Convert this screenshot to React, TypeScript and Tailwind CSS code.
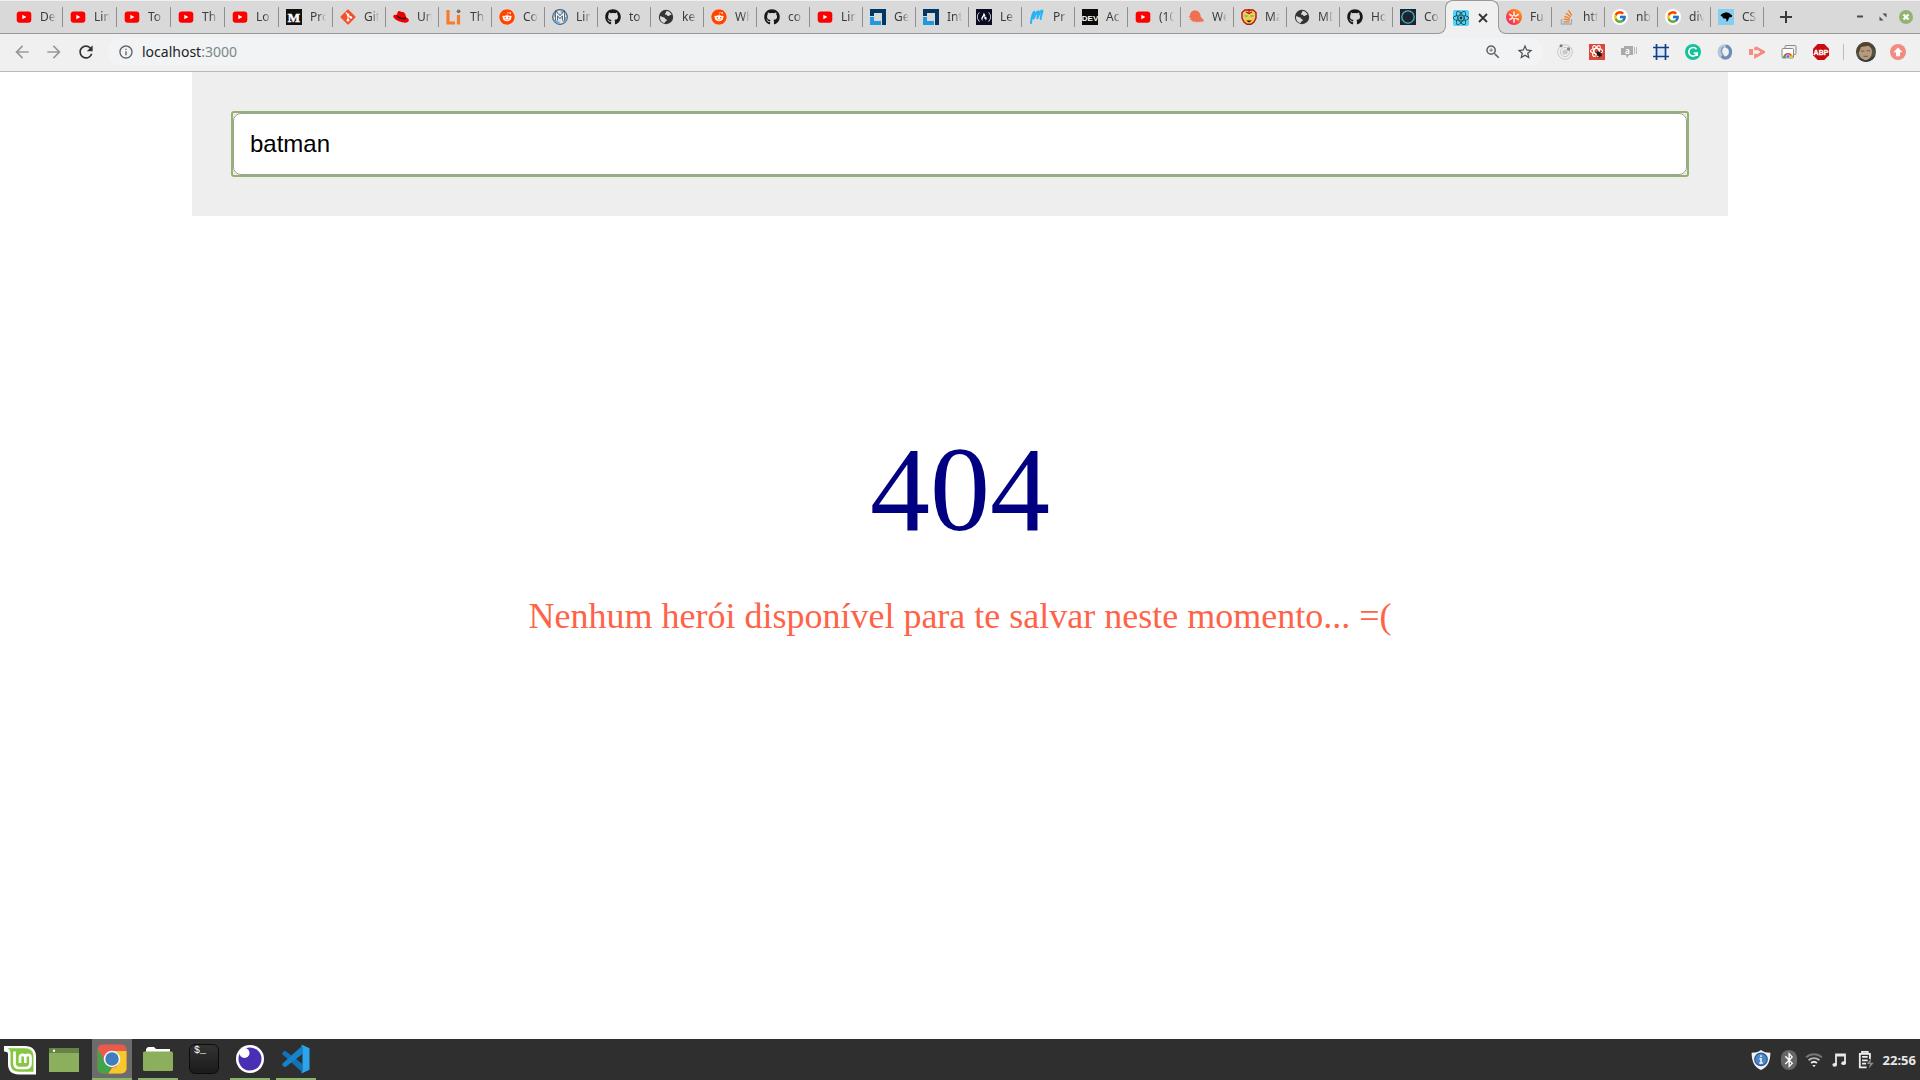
import React from "react";
import {
  FaBluetoothB,
  FaFreeCodeCamp,
  FaGitAlt,
  FaGithub,
  FaReact,
  FaReddit,
} from "react-icons/fa";
import { FcGoogle } from "react-icons/fc";
import { MdArrowBack, MdArrowForward, MdInfoOutline, MdOutlineZoomIn, MdRefresh, MdStarOutline } from "react-icons/md";

type IconProps = { children: React.ReactNode; className?: string };

function Icon({ children, className = "size-4" }: IconProps) {
  return (
    <svg viewBox="0 0 16 16" className={`block shrink-0 ${className}`} aria-hidden="true">
      {children}
    </svg>
  );
}

const YouTube = () => (
  <Icon>
    <rect x="0.7" y="2.400" width="14.6" height="11.400" rx="3" fill="#f00" />
    <path d="M6.3 5.700v4.600L10.400 8z" fill="#fff" />
  </Icon>
);

const Medium = () => (
  <Icon>
    <rect width="16" height="16" fill="#12100e" />
    <text x="8" y="12.5" textAnchor="middle" fontSize="13" fontWeight="700" fontFamily="Liberation Serif, serif" fill="#fff" stroke="#fff" strokeWidth="0.500">M</text>
  </Icon>
);

const Git = () => (
  <Icon>
    <rect x="2.400" y="2.400" width="11.200" height="11.200" rx="1" transform="rotate(45 8 8)" fill="#f4502c" />
    <path d="M5.800 3.500 8 5.700v6M8 6l3 2.800" fill="none" stroke="#fff" strokeWidth="1.100" />
    <circle cx="8" cy="5.700" r="1.300" fill="#fff" />
    <circle cx="8" cy="11.300" r="1.300" fill="#fff" />
    <circle cx="10.900" cy="8.500" r="1.300" fill="#fff" />
  </Icon>
);

const RedHat = () => (
  <Icon>
    <path d="M4 5.800C4.400 3 5 1.900 6.300 2.100c1 .1 1.500.8 2.600.8 1.200 0 2.200.2 3 1.700.7 1.200 1 2.800 1.200 3.700 1.900.9 2.900 2 2.700 3.300-.3 2-3.300 2.600-6.800 1.700C4.700 12.200.4 9.700.2 7.200.1 6 1.800 5.500 4 5.800z" fill="#e00" />
    <path d="M3.500 7c1.200 2.500 6.500 4.500 9.400 2.600l.2-1.300c-2.600 1.700-7.600.1-9.300-2.200z" fill="#111" />
  </Icon>
);

const Linode = () => (
  <Icon>
    <path d="M2 1v13h7M12.500 6v9.500" fill="none" stroke="#f97a2b" strokeWidth="3.200" />
    <circle cx="12.600" cy="2.300" r="1.900" fill="#6b7478" />
  </Icon>
);

const Reddit = () => (
  <span className="grid size-4 place-items-center rounded-full bg-white">
    <FaReddit className="size-4 text-[#ff4500]" />
  </span>
);

const BlueM = () => (
  <Icon>
    <circle cx="8" cy="8" r="7.300" fill="#dbe6ef" stroke="#4d5c69" strokeWidth="1.200" />
    <circle cx="8" cy="8" r="6" fill="none" stroke="#6cabe0" strokeWidth="2.200" strokeDasharray="6 3.400" />
    <path d="M4.500 11.500v-7L8 8l3.500-3.500v7" fill="none" stroke="#3e4a54" strokeWidth="3" />
    <path d="M4.500 11.500v-7L8 8l3.500-3.500v7" fill="none" stroke="#f4f6f8" strokeWidth="1.400" />
  </Icon>
);

const GitHub = () => <FaGithub className="size-4 text-[#191717]" />;

const Globe = () => (
  <Icon>
    <circle cx="8" cy="8" r="7.200" fill="#343434" />
    <path d="M2 7.200c1.800-.3 2.300 1.100 3.700 1.100 1.300 0 .9 1.700 2.300 1.900 1.300.2.900 1.800-.2 2-.8.200-.6 1.300-1.500 1.900C3.500 13.400 1.600 10.500 2 7.200zM8.500 1.900c2.200 0 4.200 1.600 5 3.500-.7.900-1.500.2-2.200 1-.8 1-1.900.7-2.300-.2-.4-.8-1.700-.1-2-.9-.3-.9.8-1.100.9-1.900.1-.6.200-1.200.6-1.500z" fill="#dadada" />
  </Icon>
);

const LinuxFoundation = () => (
  <Icon>
    <path d="M0 0h16v16h-4V4H4v3H0z" fill="#003764" />
    <path d="M0 8h4v4h7v4H0z" fill="#1f9ae0" />
  </Icon>
);

const FreeCodeCamp = () => (
  <span className="grid size-4 place-items-center bg-[#0a0a23]">
    <FaFreeCodeCamp className="size-3.5 text-white" />
  </span>
);

const Brush = () => (
  <Icon>
    <path d="M2 14C2.500 9 4 4 5 3c1.300-1 .3 3-.5 6.500C6 6 8.500 1.800 9.300 2.300c1 .6-.8 4-1 7C9.500 5.800 12 1.400 13.300 1.600c1 .6-2 5.400-1.600 8.400" fill="none" stroke="#25b4f5" strokeWidth="2" strokeLinecap="round" strokeLinejoin="round" />
  </Icon>
);

const Dev = () => (
  <Icon>
    <rect width="16" height="16" fill="#0a0a0a" />
    <text x="8" y="11.500" textAnchor="middle" fontSize="8" fontWeight="700" fontFamily="Liberation Sans, sans-serif" fill="#fff">DEV</text>
  </Icon>
);

const Octopus = () => (
  <Icon>
    <path d="M2 6.500C2 3.500 4 1.500 7 1.500S12.300 3.500 12.500 6.500c0 1.500 1 2.300 2 3 1 .8 1.300 2 1 3.500l-1.500-1-.4 1.500-1.600-1.200-.5 1.200-1.500-1.200-1 1.400-1.500-1.500-1.500 1.300L5.500 12l-2 .6L4 11l-2.500-.2L3 9.300.8 8z" fill="#f0714f" />
  </Icon>
);

const IronMan = () => (
  <Icon>
    <path d="M4 1h8l3 2.500V9l-2 4-3 2.300H6L3 13 1 9V3.500z" fill="#f4cf45" stroke="#b51218" strokeWidth="1.400" />
    <path d="M8 0v3.500M5 3l3 1.500L11 3" fill="none" stroke="#b51218" strokeWidth="1.200" />
    <path d="M3.500 7h3M9.500 7h3" stroke="#3fb5e8" strokeWidth="1.500" />
    <path d="M5 11.500h6l-3 2z" fill="#16120e" />
  </Icon>
);

const CircleTile = () => (
  <Icon>
    <rect width="16" height="16" fill="#20232a" />
    <circle cx="8" cy="8" r="6.200" fill="none" stroke="#3bb9dd" strokeWidth="1.300" />
  </Icon>
);

const ReactTile = () => (
  <span className="grid size-4 shrink-0 place-items-center rounded-xs bg-[#53d3f5]">
    <FaReact className="size-4 text-[#17323c]" />
  </span>
);

const Asterisk = () => (
  <Icon>
    <defs>
      <linearGradient id="asterisk" x1="1" y1="0" x2="0" y2="1">
        <stop offset="0" stopColor="#ffa012" />
        <stop offset="0.500" stopColor="#fb5a32" />
        <stop offset="1" stopColor="#f5127b" />
      </linearGradient>
    </defs>
    <circle cx="8" cy="8" r="8" fill="url(#asterisk)" />
    <path d="M8 3v10M3.700 5.500l8.600 5M12.300 5.500l-8.600 5" stroke="#ffe3dc" strokeWidth="1.700" strokeLinecap="round" />
    <circle cx="8" cy="8" r="1.100" fill="#fb5a32" />
  </Icon>
);

const Overflow = () => (
  <Icon>
    <path d="M2.500 10v5h10v-5" fill="none" stroke="#a9adb1" strokeWidth="1.400" />
    <path d="M4.500 12.800h6M4.700 10.200l6 .8M5.400 7.300l5.600 2M7 4.300l4.800 3.500M9.500 1.300l3.300 5" stroke="#ee7c26" strokeWidth="1.300" />
  </Icon>
);

const Google = () => (
  <span className="grid size-4 place-items-center rounded-full bg-white">
    <FcGoogle className="size-3.5" />
  </span>
);

const CssTricks = () => (
  <Icon>
    <rect width="16" height="16" fill="#86cdf0" />
    <path d="M2.500 6.500 4 4.800l4-1.600 3 .8 3.200 2.500-.4 1.500-2.800.6-.6 2.200L8.700 13l-.5-3.200L5 9.300l-.6-1.500z" fill="#000" />
  </Icon>
);

type Tab = { title: string; icon: React.ComponentType; wide?: boolean };

const tabsBefore: Tab[] = [
  { title: "De", icon: YouTube, wide: true },
  { title: "Lin", icon: YouTube, wide: true },
  { title: "To", icon: YouTube, wide: true },
  { title: "Th", icon: YouTube, wide: true },
  { title: "Lo", icon: YouTube, wide: true },
  { title: "Pro", icon: Medium, wide: true },
  { title: "Git", icon: Git },
  { title: "Un", icon: RedHat },
  { title: "Th", icon: Linode },
  { title: "Co", icon: Reddit },
  { title: "Lin", icon: BlueM },
  { title: "to", icon: GitHub },
  { title: "ke", icon: Globe },
  { title: "Wh", icon: Reddit },
  { title: "co", icon: GitHub },
  { title: "Lin", icon: YouTube },
  { title: "Ge", icon: LinuxFoundation },
  { title: "Int", icon: LinuxFoundation },
  { title: "Le", icon: FreeCodeCamp },
  { title: "Pr", icon: Brush },
  { title: "Ac", icon: Dev },
  { title: "(10", icon: YouTube },
  { title: "We", icon: Octopus },
  { title: "Ma", icon: IronMan },
  { title: "MD", icon: Globe },
  { title: "Ho", icon: GitHub },
  { title: "Co", icon: CircleTile },
];

const tabsAfter: Tab[] = [
  { title: "Fu", icon: Asterisk },
  { title: "htt", icon: Overflow },
  { title: "nb", icon: Google },
  { title: "div", icon: Google },
  { title: "CS", icon: CssTricks },
];

function TabButton({ tab, divider }: { tab: Tab; divider: boolean }) {
  const TabIcon = tab.icon;
  return (
    <button type="button" className={`flex h-8 items-center pl-[7px] ${tab.wide ? "w-[54px]" : "w-[53px]"}`}>
      <span className="shrink-0">
        <TabIcon />
      </span>
      <span className="ml-2 min-w-0 flex-1 overflow-hidden text-left text-xs whitespace-nowrap text-[#3c3c3c] [mask-image:linear-gradient(to_right,#000_50%,transparent)]">
        {tab.title}
      </span>
      <span className={`ml-1.5 h-5 w-px ${divider ? "bg-[#8e8e8e]" : "bg-transparent"}`} />
    </button>
  );
}

function TabStrip() {
  return (
    <div className="flex h-[34px] items-start border-t border-b border-t-[#f0f0f0] border-b-[#999] bg-[#d9d9d9] pl-[9px]">
      {tabsBefore.map((tab, i) => (
        <TabButton key={i} tab={tab} divider={i < tabsBefore.length - 1} />
      ))}
      <div className="relative z-10 -mt-px -ml-px flex h-[34px] w-[54px] items-center rounded-t-lg border border-b-0 border-[#999] bg-[#f0f0f0] pl-[7px]">
        <span className="absolute -left-2 bottom-0 size-2 overflow-hidden bg-[#f0f0f0]">
          <span className="block size-full rounded-br-lg border-r border-b border-[#999] bg-[#d9d9d9]" />
        </span>
        <span className="absolute -right-2 bottom-0 size-2 overflow-hidden bg-[#f0f0f0]">
          <span className="block size-full rounded-bl-lg border-b border-l border-[#999] bg-[#d9d9d9]" />
        </span>
        <ReactTile />
        <button type="button" aria-label="Close tab" className="ml-1.5 grid size-4 place-items-center">
          <Icon>
            <path d="m4 4 8 8M12 4l-8 8" stroke="#333" strokeWidth="1.800" />
          </Icon>
        </button>
      </div>
      {tabsAfter.map((tab, i) => (
        <TabButton key={i} tab={tab} divider />
      ))}
      <button type="button" aria-label="New tab" className="ml-3.5 grid h-8 w-4 place-items-center">
        <Icon>
          <path d="M8 2v12M2 8h12" stroke="#3a3a3a" strokeWidth="2" />
        </Icon>
      </button>
      <div className="ml-auto flex h-8 items-center gap-[7px] pr-1.5">
        <button type="button" aria-label="Minimize">
          <Icon>
            <path d="M5 7.500h6" stroke="#4c4c4c" strokeWidth="2" />
          </Icon>
        </button>
        <button type="button" aria-label="Restore">
          <Icon>
            <path d="M7.500 4.500h4v4zM4.500 7.500v4h4z" fill="#4c4c4c" />
          </Icon>
        </button>
        <button type="button" aria-label="Close window">
          <Icon>
            <circle cx="8" cy="8" r="7" fill="#92b372" />
            <path d="m5.500 5.500 5 5M10.500 5.500l-5 5" stroke="#fff" strokeWidth="2.200" />
          </Icon>
        </button>
      </div>
    </div>
  );
}

const extensions: { name: string; art: React.ReactNode }[] = [
  {
    name: "Orbit",
    art: (
      <g fill="none" stroke="#c6c6c6">
        <circle cx="8" cy="8" r="7.300" />
        <circle cx="8" cy="8" r="4.600" />
        <circle cx="8" cy="8" r="2.600" fill="#c9c9c9" stroke="none" />
        <circle cx="4" cy="1.800" r="1.500" fill="#777" stroke="none" />
        <circle cx="11.500" cy="5" r="1.700" fill="#888" stroke="none" />
      </g>
    ),
  },
  {
    name: "React Developer Tools",
    art: (
      <>
        <rect width="16" height="16" fill="#d94838" />
        <g fill="none" stroke="#fff" strokeWidth="1.200">
          <ellipse cx="7.500" cy="7" rx="6" ry="2.500" />
          <ellipse cx="7.500" cy="7" rx="6" ry="2.500" transform="rotate(60 7.500 7)" />
          <ellipse cx="7.500" cy="7" rx="6" ry="2.500" transform="rotate(120 7.500 7)" />
        </g>
        <ellipse cx="10" cy="10" rx="2" ry="3" fill="#291512" transform="rotate(-35 10 10)" />
        <path d="m6.500 8 6.500 4M7.500 12l5-5M9.500 14l3-5" stroke="#291512" strokeWidth="0.800" />
      </>
    ),
  },
  {
    name: "Chat",
    art: (
      <>
        <path d="M0 4h3V2h9v9H8l-2 3-1-3H0z" fill="#aaa" />
        <path d="M13.500 3v7M15.500 3v7" stroke="#bbb" />
        <text x="6.500" y="10" textAnchor="middle" fontSize="8" fontWeight="700" fontFamily="Open Sans, sans-serif" fill="#fff">a</text>
      </>
    ),
  },
  {
    name: "Page Ruler",
    art: (
      <>
        <rect x="3.500" y="3.500" width="9" height="9" fill="#d8e9ff" />
        <path d="M3.500 0v16M12.500 0v16M0 3.500h16M0 12.500h16" stroke="#123e8c" strokeWidth="1.700" />
      </>
    ),
  },
  {
    name: "Grammarly",
    art: (
      <>
        <circle cx="8" cy="8" r="8" fill="#15c39a" />
        <path d="M11.500 5.200A4.300 4.300 0 1 0 12.200 9H8.700M12.200 9v3" fill="none" stroke="#fff" strokeWidth="1.600" />
      </>
    ),
  },
  {
    name: "JSON Viewer",
    art: (
      <g fill="none" strokeLinecap="round">
        <path d="M6.500 14A6.300 6.300 0 0 1 6 2.200C7.500 1.700 9 2 10 2.700" stroke="#b7c6d8" strokeWidth="3.200" />
        <path d="M10 2.300A6.300 6.300 0 0 1 9 14c-1.500.2-2.500-.3-3.300-1.200" stroke="#6c8db4" strokeWidth="3.200" />
        <path d="M6 3.500C3.500 5.500 4 9.500 6.500 11.500" stroke="#7f9dbf" strokeWidth="1.600" />
      </g>
    ),
  },
  {
    name: "Video recorder",
    art: (
      <>
        <path d="M0 5h4v6H0z" fill="#f98a80" />
        <path d="M6.500 3.300v3M6.500 9.700v3l8-4.700-8-4.700" fill="none" stroke="#f98a80" strokeWidth="2.600" />
        <circle cx="13" cy="8" r="2" fill="#f98a80" />
      </>
    ),
  },
  {
    name: "Web Store",
    art: (
      <>
        <rect x="4" y="1.500" width="11" height="9" rx="1" fill="#eee" stroke="#8a8a8a" />
        <rect x="1" y="4.500" width="11.500" height="9.500" rx="1" fill="#fff" stroke="#888" />
        <path d="M2 14a5 5 0 0 1 10 0z" fill="#e24435" />
        <path d="M7 14h5a5 5 0 0 0-1.200-3.200z" fill="#fbc116" />
        <path d="M2 14h5l-3.800-3.200z" fill="#3ba757" />
        <circle cx="7" cy="12.600" r="1.900" fill="#4587e8" stroke="#fff" strokeWidth="0.600" />
      </>
    ),
  },
  {
    name: "Adblock Plus",
    art: (
      <>
        <path d="M4.700 0h6.600L16 4.700v6.600L11.300 16H4.700L0 11.300V4.700z" fill="#c70d0f" />
        <text x="8" y="10.800" textAnchor="middle" fontSize="7" fontWeight="700" fontFamily="Liberation Sans, sans-serif" fill="#fff" stroke="#fff" strokeWidth="0.300">ABP</text>
      </>
    ),
  },
];

function Toolbar() {
  return (
    <div className="flex h-[38px] items-center border-b border-[#b8b8b8] bg-[#f0f0f0] pr-3.5 pb-0.5 pl-3">
      <div className="flex gap-3 text-[#999]">
        <button type="button" aria-label="Back">
          <MdArrowBack className="size-5" />
        </button>
        <button type="button" aria-label="Forward">
          <MdArrowForward className="size-5" />
        </button>
        <button type="button" aria-label="Reload" className="text-[#333]">
          <MdRefresh className="size-5" />
        </button>
      </div>
      <div className="ml-3 flex h-7 flex-1 items-center rounded-full bg-[#f1f3f4] pr-[9px] pl-2.5">
        <MdInfoOutline className="size-4 text-[#5f6368]" />
        <span className="ml-2 flex-1 text-sm leading-5 text-[#222]">
          localhost<span className="text-[#80868b]">:3000</span>
        </span>
        <button type="button" aria-label="Zoom" className="text-[#5f6368]">
          <MdOutlineZoomIn className="size-[18px]" />
        </button>
        <button type="button" aria-label="Bookmark" className="ml-3.5 text-[#4a4d51]">
          <MdStarOutline className="size-[18px]" />
        </button>
      </div>
      <div className="ml-3.5 flex items-center gap-4">
        {extensions.map((extension) => (
          <button type="button" key={extension.name} aria-label={extension.name}>
            <Icon>{extension.art}</Icon>
          </button>
        ))}
      </div>
      <span className="mr-3 ml-3.5 h-4 w-px bg-[#bbb]" />
      <button type="button" aria-label="Profile">
        <Icon className="size-5 rounded-full">
          <rect width="16" height="16" fill="#4c5245" />
          <ellipse cx="7.500" cy="8" rx="5.300" ry="6.500" fill="#b59a7e" />
          <path d="M0 0h16v7L12.500 5 10 3 4 4 2.500 8 0 9z" fill="#50452f" />
          <path d="M4 7.200h2.600M8.600 6.800h2.600M6 11.500h3.500" stroke="#806350" />
          <path d="m0 12 4 1 4 2 5-3 3-1v5H0z" fill="#343c3a" />
        </Icon>
      </button>
      <button type="button" aria-label="Update" className="ml-3.5">
        <Icon>
          <circle cx="8" cy="8" r="8" fill="#f48b80" />
          <path d="m8 3.500 4.500 4.700H10v4H6v-4H3.500z" fill="#fff" />
        </Icon>
      </button>
    </div>
  );
}

const MintLogo = () => (
  <svg viewBox="0 0 32 30" className="h-[30px] w-8" aria-hidden="true">
    <path d="M0 1h21c7 0 11 4 11 10v18.500H15C8 29.500 4 26 4 19V9C4 7.500 3 6.500 0 6.500z" fill="#fff" />
    <path d="M3.500 3.300H21c5.500 0 8.500 3 8.500 8v15.500H15c-5.500 0-8.500-3-8.500-8V8.500C6.500 6 5.700 4.500 3.500 3.300z" fill="#86c642" />
    <path d="M10.500 6.500V18c0 3.300 1.600 5 5 5h6c3.300 0 5-1.700 5-5v-5.500c0-1.700-1-2.700-2.500-2.700s-2.700 1-2.700 2.700V18v-5.500c0-1.700-1-2.700-2.700-2.700-1.600 0-2.600 1-2.600 2.700V18" fill="none" stroke="#fff" strokeWidth="2.700" />
  </svg>
);

const DesktopIcon = () => (
  <svg viewBox="0 0 30 24" className="h-6 w-[30px]" aria-hidden="true">
    <rect width="30" height="24" fill="#8caf5e" />
    <rect width="30" height="5" fill="#668347" />
    <circle cx="5" cy="2.800" r="1.200" fill="#fff" />
  </svg>
);

const ChromeIcon = () => (
  <svg viewBox="0 0 30 30" className="size-[30px]" aria-hidden="true">
    <defs>
      <clipPath id="chrome-tile">
        <rect x="0.500" y="0.500" width="29" height="29" rx="5" />
      </clipPath>
    </defs>
    <g clipPath="url(#chrome-tile)">
      <rect width="30" height="30" fill="#eb5a4d" />
      <path d="M0 3 8 18l7 6-4 6H0z" fill="#43a34b" />
      <path d="M15 7h15v23H15l7-11z" fill="#f5c92c" />
      <path d="M15.500 30 22 19l-3 4-4 1-4 6z" fill="#f5c92c" />
    </g>
    <circle cx="15" cy="15" r="8.300" fill="#f4f4f4" />
    <circle cx="15" cy="15" r="6.700" fill="#3f7dbd" />
  </svg>
);

const FolderIcon = () => (
  <svg viewBox="0 0 30 24" className="h-6 w-[30px]" aria-hidden="true">
    <path d="M3 6V2l2-2h6l2 2h14v6H3z" fill="#fff" />
    <rect y="4.500" width="30" height="19.500" rx="1.500" fill="#8caf5e" />
  </svg>
);

const TerminalIcon = () => (
  <span className="block size-[30px] rounded-md border border-[#0c0c0c] bg-linear-to-b from-[#333] to-[#1b1b1b] pl-1 text-left font-['Liberation_Mono',monospace] text-[10px] leading-3 text-white">
    $_
  </span>
);

const InsomniaIcon = () => (
  <svg viewBox="0 0 28 28" className="size-7" aria-hidden="true">
    <circle cx="14" cy="14" r="14" fill="#fff" />
    <circle cx="14" cy="14" r="11.500" fill="#4a2fb5" />
    <circle cx="8.500" cy="8" r="5" fill="#fff" />
  </svg>
);

const VsCodeIcon = () => (
  <svg viewBox="0 0 28 28" className="size-7" aria-hidden="true">
    <path d="M1.800 6.300 3.600 6 20.500 19v8.500L.3 9.300V8z" fill="#1172b5" />
    <path d="M1.800 21.700 3.600 22 20.500 9V.5L.3 18.700V20z" fill="#1583cb" />
    <path d="m20.500 0 7 3.300v21.400l-7 3.300-1.500-.5 1.500-1.500V2L19 .5z" fill="#2ba5ee" />
  </svg>
);

const apps: { name: string; art: React.ReactNode; running: boolean; active?: boolean }[] = [
  { name: "Google Chrome", art: <ChromeIcon />, running: true, active: true },
  { name: "Files", art: <FolderIcon />, running: true },
  { name: "Terminal", art: <TerminalIcon />, running: false },
  { name: "Insomnia", art: <InsomniaIcon />, running: true },
  { name: "Visual Studio Code", art: <VsCodeIcon />, running: true },
];

function Taskbar() {
  return (
    <footer className="flex h-[41px] items-center bg-[#2f2f2f] px-1">
      <button type="button" aria-label="Menu">
        <MintLogo />
      </button>
      <button type="button" aria-label="Show desktop" className="ml-[13px]">
        <DesktopIcon />
      </button>
      <div className="ml-[13px] flex gap-1.5">
        {apps.map((app) => (
          <button
            type="button"
            key={app.name}
            aria-label={app.name}
            className={`grid h-[41px] w-10 place-items-center border-b-2 ${app.running ? "border-[#8fb26b]" : "border-transparent"} ${app.active ? "bg-[#6c6c6c]" : ""}`}
          >
            {app.art}
          </button>
        ))}
      </div>
      <div className="ml-auto flex items-center text-[#e8e8e8]">
        <Icon className="size-5">
          <path d="M8 0c2 1.600 4.500 2.200 7.500 2.200C15.500 9 13.500 13.500 8 16 2.500 13.500.5 9 .5 2.200 3.500 2.200 6 1.600 8 0z" fill="#f2f2f2" />
          <circle cx="8" cy="7.500" r="5" fill="#4a86c8" stroke="#2b5b93" />
          <path d="M8 4.200v1.400M6.800 7H8v3.500M6.600 10.500h2.900" fill="none" stroke="#fff" strokeWidth="1.100" />
        </Icon>
        <span className="ml-2.5 grid h-5 w-4 place-items-center rounded-full bg-[#666]">
          <FaBluetoothB className="size-4 text-white" />
        </span>
        <Icon className="ml-2 size-[18px]">
          <g fill="none" strokeWidth="1.700">
            <path d="M1 5.700a10 10 0 0 1 14 0" stroke="#777" />
            <path d="M3.200 8.200a7 7 0 0 1 9.600 0" stroke="#b5b5b5" />
            <path d="M5.400 10.600a4 4 0 0 1 5.200 0" stroke="#eee" />
          </g>
          <path d="M6.500 12.500h3L8 14.500z" fill="#eee" />
        </Icon>
        <Icon className="ml-2 size-4">
          <path d="M5 13V2.500h9V11" fill="none" stroke="#e8e8e8" strokeWidth="1.800" />
          <path d="M5 3.500h9" stroke="#e8e8e8" strokeWidth="2" />
          <ellipse cx="3.700" cy="12.800" rx="2.300" ry="1.900" fill="#e8e8e8" />
          <ellipse cx="12.600" cy="11.200" rx="2.300" ry="1.900" fill="#e8e8e8" />
        </Icon>
        <Icon className="ml-2.5 size-[18px]">
          <path d="M4.500 2V.8h5V2M11.500 7V2.500h-9v12h6" fill="none" stroke="#eee" strokeWidth="1.600" />
          <path d="M4.500 5.300h5M4.500 8.300h5M4.500 11.300h3.500" stroke="#eee" strokeWidth="1.500" />
          <path d="m12.500 6.500-4 5h3l-1 4 4.500-5h-3z" fill="#888" />
        </Icon>
        <time className="ml-2 text-[13px] leading-5 font-bold">22:56</time>
      </div>
    </footer>
  );
}

export default function App() {
  return (
    <div className="flex min-h-screen flex-col bg-white font-['Noto_Sans',sans-serif]">
      <header>
        <TabStrip />
        <Toolbar />
      </header>
      <main className="mx-auto w-4/5 flex-1 text-center">
        <form className="bg-[#eee] p-[39px]" onSubmit={(event) => event.preventDefault()}>
          <div className="rounded-[3px] border-2 border-[#92b372]">
            <input
              type="text"
              aria-label="Buscar herói"
              defaultValue="batman"
              className="block h-[62px] w-full rounded-lg border border-[#a0a0a0] bg-white px-4 font-['Liberation_Sans',sans-serif] text-2xl text-black outline-none"
            />
          </div>
        </form>
        <section className="pt-[214px] font-['Liberation_Serif',serif]">
          <h1 className="text-[120px] leading-[120px] text-[#000080]">404</h1>
          <p className="mt-[46px] text-4xl leading-10 text-[#ff6347]">
            Nenhum herói disponível para te salvar neste momento... =(
          </p>
        </section>
      </main>
      <Taskbar />
    </div>
  );
}
